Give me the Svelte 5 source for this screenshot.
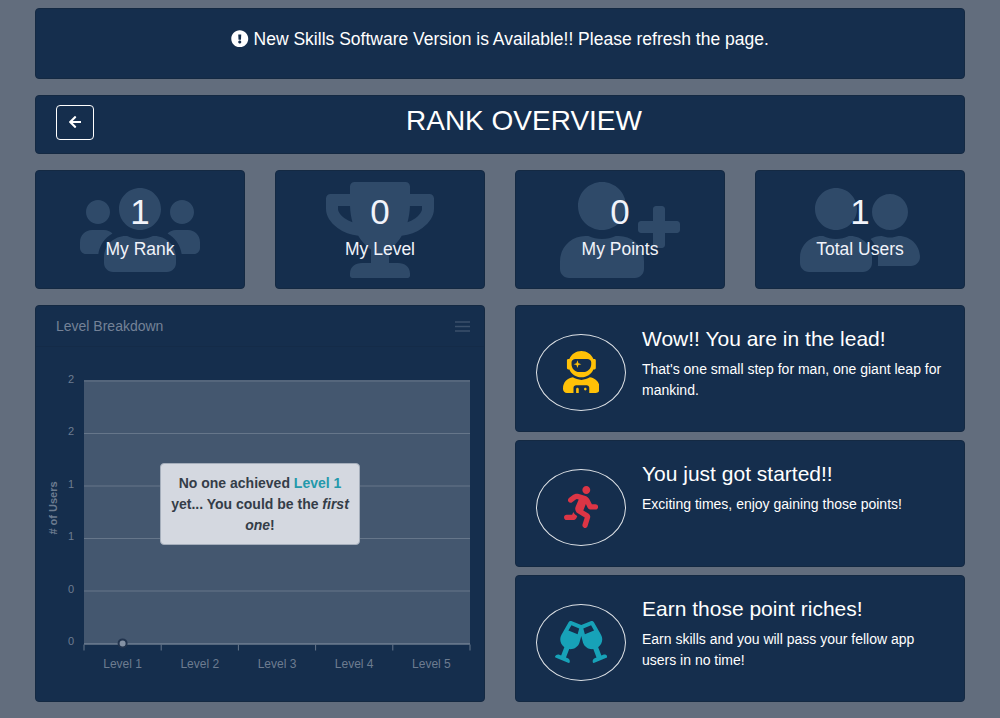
<script>
  const glyphs = {
    users: [640, 'M96 224c35.3 0 64-28.7 64-64s-28.7-64-64-64-64 28.7-64 64 28.7 64 64 64zm448 0c35.3 0 64-28.7 64-64s-28.7-64-64-64-64 28.7-64 64 28.7 64 64 64zm32 32h-64c-17.6 0-33.5 7.1-45.1 18.6 40.3 22.1 68.9 62 75.1 109.4h66c17.7 0 32-14.3 32-32v-32c0-35.3-28.7-64-64-64zm-256 0c61.9 0 112-50.1 112-112S381.9 32 320 32 208 82.1 208 144s50.1 112 112 112zm76.8 32h-8.3c-20.8 10-43.9 16-68.5 16s-47.6-6-68.5-16h-8.3C179.6 288 128 339.6 128 403.2V432c0 26.5 21.5 48 48 48h288c26.5 0 48-21.5 48-48v-28.8c0-63.6-51.6-115.2-115.2-115.2zm-223.7-13.4C161.5 263.1 145.6 256 128 256H64c-35.3 0-64 28.7-64 64v32c0 17.7 14.3 32 32 32h65.9c6.3-47.4 34.9-87.3 75.2-109.4z'],
    trophy: [576, 'M552 64H448V24c0-13.3-10.7-24-24-24H152c-13.3 0-24 10.7-24 24v40H24C10.7 64 0 74.7 0 88v56c0 35.7 22.5 72.4 61.9 100.7 31.5 22.7 69.8 37.1 110 41.7C203.3 338.5 240 360 240 360v72h-48c-35.3 0-64 20.7-64 56v12c0 6.6 5.4 12 12 12h296c6.6 0 12-5.4 12-12v-12c0-35.3-28.7-56-64-56h-48v-72s36.7-21.5 68.1-73.6c40.3-4.6 78.6-19 110-41.7 39.3-28.3 61.9-65 61.9-100.7V88c0-13.3-10.7-24-24-24zM99.3 192.8C74.9 175.2 64 155.6 64 144v-16h64.2c1 32.6 5.8 61.2 12.8 86.2-15.1-5.2-29.2-12.4-41.7-21.4zM512 144c0 16.1-17.7 36.1-35.3 48.8-12.5 9-26.7 16.2-41.8 21.4 7-25 11.8-53.6 12.8-86.2H512v16z'],
    userPlus: [640, 'M624 208h-64v-64c0-8.8-7.2-16-16-16h-32c-8.8 0-16 7.2-16 16v64h-64c-8.8 0-16 7.2-16 16v32c0 8.8 7.2 16 16 16h64v64c0 8.8 7.2 16 16 16h32c8.8 0 16-7.2 16-16v-64h64c8.8 0 16-7.2 16-16v-32c0-8.8-7.2-16-16-16zm-400 48c70.7 0 128-57.3 128-128S294.7 0 224 0 96 57.3 96 128s57.3 128 128 128zm89.6 32h-16.7c-22.2 10.2-46.9 16-72.9 16s-50.6-5.8-72.9-16h-16.7C60.2 288 0 348.2 0 422.4V464c0 26.5 21.5 48 48 48h352c26.5 0 48-21.5 48-48v-41.6c0-74.2-60.2-134.4-134.4-134.4z'],
    friends: [640, 'M192 256c61.9 0 112-50.1 112-112S253.9 32 192 32 80 82.1 80 144s50.1 112 112 112zm76.8 32h-8.3c-20.8 10-43.9 16-68.5 16s-47.6-6-68.5-16h-8.3C51.6 288 0 339.6 0 403.2V432c0 26.5 21.5 48 48 48h288c26.5 0 48-21.5 48-48v-28.8c0-63.6-51.6-115.2-115.2-115.2zM480 256c53 0 96-43 96-96s-43-96-96-96-96 43-96 96 43 96 96 96zm48 32h-3.8c-13.9 4.8-28.6 8-44.2 8s-30.3-3.2-44.2-8H432c-20.4 0-39.2 5.9-55.7 15.4 24.4 26.3 39.7 61.2 39.7 99.8v38.4c0 2.2-.5 4.3-.6 6.4H592c26.5 0 48-21.5 48-48 0-61.9-50.1-112-112-112z'],
    astronaut: [448, 'M64 224h13.5c24.7 56.5 80.9 96 146.5 96s121.8-39.5 146.5-96H384c8.8 0 16-7.2 16-16v-96c0-8.8-7.2-16-16-16h-13.5C345.8 39.5 289.6 0 224 0S102.2 39.5 77.5 96H64c-8.8 0-16 7.2-16 16v96c0 8.8 7.2 16 16 16zm40-88c0-22.1 21.5-40 48-40h144c26.5 0 48 17.9 48 40v24c0 53-43 96-96 96h-48c-53 0-96-43-96-96v-24zm72 72l12-36 36-12-36-12-12-36-12 36-36 12 36 12 12 36zm151.6 113.4C297.7 340.7 262.2 352 224 352s-73.7-11.3-103.6-30.6C52.9 328.5 0 385 0 454.4v9.6c0 26.5 21.5 48 48 48h80v-64c0-17.7 14.3-32 32-32h128c17.7 0 32 14.3 32 32v64h80c26.5 0 48-21.5 48-48v-9.6c0-69.4-52.9-125.9-120.4-133zM272 448c-8.8 0-16 7.2-16 16s7.2 16 16 16 16-7.2 16-16-7.2-16-16-16zm-96 0c-8.8 0-16 7.2-16 16v48h32v-48c0-8.8-7.2-16-16-16z'],
    running: [416, 'M272 96c26.51 0 48-21.49 48-48S298.51 0 272 0s-48 21.49-48 48 21.49 48 48 48zM113.69 317.47l-14.8 34.52H32c-17.67 0-32 14.33-32 32s14.33 32 32 32h77.45c19.25 0 36.58-11.44 44.11-29.09l8.79-20.52-10.67-6.3c-17.32-10.23-30.06-25.37-37.99-42.61zM384 223.99h-44.03l-26.06-53.25c-12.5-25.55-35.45-44.23-61.78-50.94l-71.08-21.14c-28.3-6.8-57.77-.55-80.84 17.14l-39.67 30.41c-14.03 10.75-16.69 30.83-5.92 44.86s30.84 16.66 44.86 5.92l39.69-30.41c7.67-5.89 17.44-8 25.27-6.14l14.7 4.37-37.46 87.39c-12.62 29.48-1.31 64.01 26.3 80.31l84.98 50.17-27.47 87.73c-5.28 16.86 4.11 34.82 20.97 40.09 3.19 1 6.41 1.48 9.58 1.48 13.61 0 26.23-8.77 30.52-22.45l31.64-101.06c5.91-20.77-2.89-43.08-21.64-54.39l-61.24-36.14 31.31-78.28 20.27 41.43c8 16.34 24.92 26.89 43.11 26.89H384c17.67 0 32-14.33 32-32s-14.33-31.99-32-31.99z'],
    cheers: [640, 'M639.4 433.6c-8.4-20.4-31.8-30.1-52.2-21.6l-22.1 9.2-38.7-101.9c47.9-35 64.8-100.3 34.5-152.8L474.3 16c-8-13.9-25.1-19.7-40-13.6L320 49.8 205.7 2.4c-14.9-6.1-32-.3-40 13.6L79.1 166.5C48.9 219 65.7 284.3 113.6 319.2L74.9 421.1l-22.1-9.2c-20.4-8.5-43.7 1.2-52.2 21.6-1.7 4.1.2 8.8 4.3 10.5l162.3 67.4c4.1 1.7 8.7-.2 10.4-4.3 8.4-20.4-1.2-43.8-21.6-52.3l-22.1-9.2L173.3 342c4.4.5 8.8 1.3 13.1 1.3 51.7 0 99.4-33.1 113.4-85.3l20.2-75.4 20.2 75.4c14 52.2 61.7 85.3 113.4 85.3 4.3 0 8.7-.8 13.1-1.3L506 445.6l-22.1 9.2c-20.4 8.5-30.1 31.9-21.6 52.3 1.7 4.1 6.4 6 10.4 4.3L635.1 444c4.1-1.7 6-6.3 4.3-10.4zM275.9 162.1l-112.1-46.5 36.5-63.4 94.5 39.2-18.9 70.7zm88.2 0l-18.9-70.7 94.5-39.2 36.5 63.4-112.1 46.5z'],
    alert: [512, 'M504 256c0 136.997-111.043 248-248 248S8 392.997 8 256C8 119.083 119.043 8 256 8s248 111.083 248 248zm-248 50c-25.405 0-46 20.595-46 46s20.595 46 46 46 46-20.595 46-46-20.595-46-46-46zm-43.673-165.346l7.418 136c.347 6.364 5.609 11.346 11.982 11.346h48.546c6.373 0 11.635-4.982 11.982-11.346l7.418-136c.375-6.874-5.098-12.654-11.982-12.654h-63.383c-6.884 0-12.356 5.78-11.981 12.654z'],
    back: [448, 'M257.5 445.1l-22.2 22.2c-9.4 9.4-24.6 9.4-33.9 0L7 273c-9.4-9.4-9.4-24.6 0-33.9L201.4 44.7c9.4-9.4 24.6-9.4 33.9 0l22.2 22.2c9.5 9.5 9.3 25-.4 34.3L136.6 216H424c13.3 0 24 10.7 24 24v32c0 13.3-10.7 24-24 24H136.6l120.5 114.8c9.8 9.3 10 24.8.4 34.3z']
  };

  const stats = [
    { value: 1, label: 'My Rank', icon: 'users' },
    { value: 0, label: 'My Level', icon: 'trophy' },
    { value: 0, label: 'My Points', icon: 'userPlus' },
    { value: 1, label: 'Total Users', icon: 'friends' }
  ];

  const notes = [
    { icon: 'astronaut', tone: 'warning', title: 'Wow!! You are in the lead!', text: "That's one small step for man, one giant leap for mankind." },
    { icon: 'running', tone: 'danger', title: 'You just got started!!', text: 'Exciting times, enjoy gaining those points!' },
    { icon: 'cheers', tone: 'info', title: 'Earn those point riches!', text: 'Earn skills and you will pass your fellow app users in no time!' }
  ];

  const yLabels = [2, 2, 1, 1, 0, 0];
  const levels = ['Level 1', 'Level 2', 'Level 3', 'Level 4', 'Level 5'];
  const plot = { left: 48, top: 34, width: 386, height: 262.5 };
  const gridY = (i) => plot.top + (plot.height / 5) * i;
  const tickX = (i) => plot.left + (plot.width / 5) * i;
</script>

{#snippet icon(name, size)}
  <svg class="icon" viewBox="0 0 {glyphs[name][0]} 512" width={(glyphs[name][0] / 512) * size} height={size} aria-hidden="true">
    <path fill="currentColor" d={glyphs[name][1]} />
  </svg>
{/snippet}

<main>
  <section class="card banner">
    {@render icon('alert', 17.5)}
    <span>New Skills Software Version is Available!! Please refresh the page.</span>
  </section>

  <header class="card heading">
    <button aria-label="Back">{@render icon('back', 14)}</button>
    <h1>RANK OVERVIEW</h1>
  </header>

  <section class="stats">
    {#each stats as s}
      <div class="card stat">
        <div class="backdrop">{@render icon(s.icon, 96)}</div>
        <div class="figures">
          <div class="value">{s.value}</div>
          <div class="label">{s.label}</div>
        </div>
      </div>
    {/each}
  </section>

  <section class="columns">
    <div class="card chart">
      <div class="chart-head">
        <span>Level Breakdown</span>
        <svg width="15" height="11" viewBox="0 0 15 11" aria-hidden="true">
          <path d="M0 1h15M0 5.5h15M0 10h15" stroke="#3b506b" stroke-width="1.6" />
        </svg>
      </div>
      <div class="chart-body">
        <svg width="448" height="355" viewBox="0 0 448 355">
          <rect x={plot.left} y={plot.top - 1} width={plot.width} height={plot.height + 1} fill="#44576f" />
          {#each yLabels as y, i}
            <line x1={plot.left} x2={plot.left + plot.width} y1={gridY(i)} y2={gridY(i)} stroke="#66768a" />
            <text class="y" x="38" y={gridY(i) + 1.5} text-anchor="end">{y}</text>
          {/each}
          <line x1={plot.left} x2={plot.left + plot.width} y1="297.3" y2="297.3" stroke="#66768a" />
          {#each [0, 1, 2, 3, 4, 5] as i}
            <line x1={tickX(i)} x2={tickX(i)} y1="297.5" y2="303.5" stroke="#66768a" />
          {/each}
          {#each levels as l, i}
            <text class="x" x={tickX(i + 0.5)} y="321" text-anchor="middle">{l}</text>
          {/each}
          <circle cx={tickX(0.5)} cy="296.4" r="4" fill="#8592a4" stroke="#22344e" stroke-width="2" />
          <text class="axis" transform="translate(21 161) rotate(-90)" text-anchor="middle"># of Users</text>
        </svg>
        <div class="tip">No one achieved <b>Level 1</b> yet... You could be the <i>first one</i>!</div>
      </div>
    </div>

    <div class="notes">
      {#each notes as n}
        <div class="card note">
          <div class="ring {n.tone}">{@render icon(n.icon, 42)}</div>
          <div class="copy">
            <h2>{n.title}</h2>
            <p>{n.text}</p>
          </div>
        </div>
      {/each}
    </div>
  </section>
</main>

<style>
  :global(body) {
    background: #626d7d;
    overflow: hidden;
  }
  main {
    box-sizing: border-box;
    height: 718px;
    padding: 8px 35px 16px;
    display: flex;
    flex-direction: column;
    gap: 16px;
    font: 14px/21px "Liberation Sans", Arial, sans-serif;
    color: #fff;
  }
  .icon {
    display: block;
    flex: none;
  }
  .card {
    box-sizing: border-box;
    background: #152e4d;
    border: 1px solid #142942;
    border-radius: 4px;
  }
  .banner {
    height: 71px;
    display: flex;
    justify-content: center;
    align-items: flex-start;
    gap: 4.86px;
    padding-top: 17px;
    font-size: 17.5px;
    line-height: 26px;
  }
  .banner .icon {
    margin-top: 3.6px;
  }
  .heading {
    height: 59px;
    display: flex;
    align-items: flex-start;
    padding: 9px 10px 9px 20px;
  }
  button {
    box-sizing: border-box;
    width: 38px;
    height: 35px;
    padding: 0 0 2px;
    display: grid;
    place-items: center;
    background: none;
    border: 1px solid #fff;
    border-radius: 4px;
    color: #fff;
  }
  h1 {
    flex: 1;
    margin: 0;
    font-size: 28px;
    line-height: 32px;
    font-weight: 400;
    text-align: center;
  }
  .stats {
    display: grid;
    grid-template-columns: repeat(4, 1fr);
    gap: 30px;
  }
  .stat {
    height: 119px;
    display: grid;
    justify-items: center;
  }
  .backdrop,
  .figures {
    grid-area: 1 / 1;
  }
  .backdrop {
    padding-top: 11px;
    color: #2f4a69;
  }
  .figures {
    z-index: 1;
    padding-top: 20px;
    text-align: center;
    color: #f1f3fa;
  }
  .value {
    font-size: 35px;
    line-height: 42px;
  }
  .label {
    margin-top: 3px;
    font-size: 17.5px;
    line-height: 26px;
  }
  .columns {
    display: grid;
    grid-template-columns: 450px 450px;
    gap: 30px;
  }
  .chart {
    height: 397px;
  }
  .chart-head {
    box-sizing: border-box;
    height: 41px;
    display: flex;
    align-items: center;
    justify-content: space-between;
    padding: 0 14px 0 20px;
    border-bottom: 1px solid #142b48;
    color: #748297;
  }
  .chart-body {
    position: relative;
  }
  .chart-body svg {
    display: block;
  }
  text {
    fill: #6d7c90;
    font-size: 12px;
  }
  .y {
    font-size: 11px;
  }
  .axis {
    font-size: 11px;
    font-weight: 700;
  }
  .tip {
    position: absolute;
    box-sizing: border-box;
    left: 124px;
    top: 116px;
    width: 200px;
    height: 82px;
    padding: 9px 8px;
    border: 1px solid #a5aebb;
    border-radius: 4px;
    background: #d4d8e0;
    color: #343d48;
    font-weight: 700;
    text-align: center;
  }
  .tip b {
    color: #2499ab;
  }
  .notes {
    display: flex;
    flex-direction: column;
    gap: 8px;
  }
  .note {
    height: 127px;
    display: flex;
    gap: 16px;
    padding: 20px;
  }
  .ring {
    box-sizing: border-box;
    flex: none;
    width: 90px;
    height: 77px;
    margin-top: 8px;
    padding-top: 16px;
    display: flex;
    justify-content: center;
    align-items: flex-start;
    border: 1px solid #dee2e6;
    border-radius: 50%;
  }
  .warning { color: #ffc107; }
  .danger { color: #dc3545; }
  .info { color: #17a2b8; }
  h2 {
    margin: 0 0 8px;
    font-size: 21px;
    line-height: 25px;
    font-weight: 400;
  }
  p {
    margin: 0;
  }
</style>
